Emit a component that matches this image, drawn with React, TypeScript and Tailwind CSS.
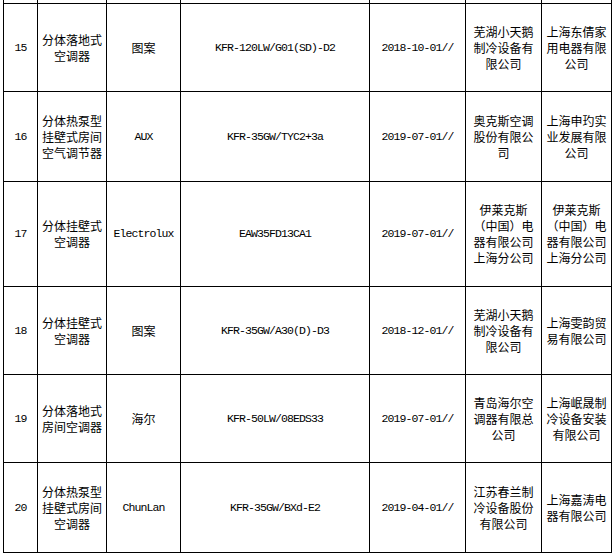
import React from "react";

type Row = {
  no: string;
  name: string;
  brand: string;
  brandCn?: boolean;
  model: string;
  date: string;
  maker: string;
  seller: string;
  h: string;
};

const rows: Row[] = [
  { no: "15", name: "分体落地式空调器", brand: "图案", brandCn: true, model: "KFR-120LW/G01(SD)-D2", date: "2018-10-01//", maker: "芜湖小天鹅制冷设备有限公司", seller: "上海东倩家用电器有限公司", h: "h-[88px]" },
  { no: "16", name: "分体热泵型挂壁式房间空气调节器", brand: "AUX", model: "KFR-35GW/TYC2+3a", date: "2019-07-01//", maker: "奥克斯空调股份有限公司", seller: "上海申玓实业发展有限公司", h: "h-[90px]" },
  { no: "17", name: "分体挂壁式空调器", brand: "Electrolux", model: "EAW35FD13CA1", date: "2019-07-01//", maker: "伊莱克斯（中国）电器有限公司上海分公司", seller: "伊莱克斯（中国）电器有限公司上海分公司", h: "h-[105px]" },
  { no: "18", name: "分体挂壁式空调器", brand: "图案", brandCn: true, model: "KFR-35GW/A30(D)-D3", date: "2018-12-01//", maker: "芜湖小天鹅制冷设备有限公司", seller: "上海雯韵贸易有限公司", h: "h-[88px]" },
  { no: "19", name: "分体落地式房间空调器", brand: "海尔", brandCn: true, model: "KFR-50LW/08EDS33", date: "2019-07-01//", maker: "青岛海尔空调器有限总公司", seller: "上海岷晟制冷设备安装有限公司", h: "h-[88px]" },
  { no: "20", name: "分体热泵型挂壁式房间空调器", brand: "ChunLan", model: "KFR-35GW/BXd-E2", date: "2019-04-01//", maker: "江苏春兰制冷设备股份有限公司", seller: "上海嘉涛电器有限公司", h: "h-[90px]" },
];

const cn = "font-['Noto_Sans_CJK_SC','Noto_Sans',sans-serif] text-[12px] leading-[16px]";
const mono = "font-['Liberation_Mono',monospace] text-[11.5px] tracking-[-0.9px] leading-[16px]";
const cell = "border-r border-b border-black flex items-center justify-center text-center text-black px-[3px]";

export default function App() {
  return (
    <div className="w-[615px] h-[555px] bg-white overflow-hidden">
      <div className="ml-[3px] w-fit border-l border-black grid grid-cols-[34px_69px_74px_189px_96px_76px_70px]">
        {Array.from({ length: 7 }).map((_, i) => (
          <div key={i} className="h-[4px] border-r border-b border-black" />
        ))}
        {rows.map((r) => (
          <React.Fragment key={r.no}>
            <div className={`${cell} ${r.h} ${mono}`}>{r.no}</div>
            <div className={`${cell} ${r.h} ${cn}`}>{r.name}</div>
            <div className={`${cell} ${r.h} ${r.brandCn ? cn : mono}`}>{r.brand}</div>
            <div className={`${cell} ${r.h} ${mono}`}>{r.model}</div>
            <div className={`${cell} ${r.h} ${mono}`}>{r.date}</div>
            <div className={`${cell} ${r.h} ${cn}`}>{r.maker}</div>
            <div className={`${cell} ${r.h} ${cn}`}>{r.seller}</div>
          </React.Fragment>
        ))}
      </div>
    </div>
  );
}
